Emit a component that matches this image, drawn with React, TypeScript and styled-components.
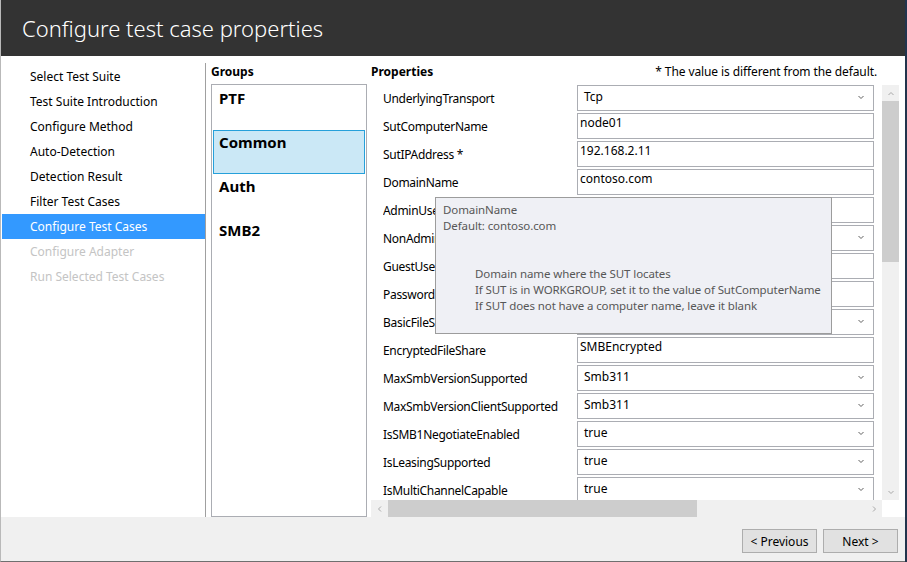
import React, { FC } from "react";
import styled, { createGlobalStyle } from "styled-components";

const GlobalStyle = createGlobalStyle`
  html, body {
    margin: 0;
    padding: 0;
    background: #22344d;
  }
  body {
    font-family: "Noto Sans", "Segoe UI", sans-serif;
    font-size: 12px;
    color: #000;
  }
  * {
    box-sizing: border-box;
  }
`;

const Window = styled.div`
  position: relative;
  width: 905px;
  height: 562px;
  display: flex;
  flex-direction: column;
  background: #fff;
  border-left: 1px solid #b9b9b9;
  border-bottom: 1px solid #6f6f6f;
`;

const Header = styled.header`
  height: 56px;
  flex: none;
  display: flex;
  align-items: center;
  padding: 0 0 1px 21px;
  background: #333333;
  color: #fff;
  font-size: 22px;
  font-weight: 300;
`;

const Main = styled.div`
  flex: 1;
  display: flex;
  min-height: 0;
`;

const Nav = styled.ul`
  list-style: none;
  width: 205px;
  margin: 7px 0 0;
  padding: 1px 0 0 1px;
  border-right: 1px solid #a0a0a0;
`;

const NavItem = styled.li<{ $state?: "active" | "disabled" }>`
  height: 25px;
  line-height: 25px;
  padding-left: 28px;
  color: ${(p) =>
    p.$state === "active" ? "#fff" : p.$state === "disabled" ? "#c4c4c4" : "#000"};
  background: ${(p) => (p.$state === "active" ? "#3399ff" : "transparent")};
`;

const GroupsColumn = styled.section`
  width: 161px;
  display: flex;
  flex-direction: column;
  gap: 4px;
  padding: 8px 0 0 5px;
`;

const SectionTitle = styled.div`
  height: 16px;
  line-height: 16px;
  font-weight: 700;
`;

const GroupList = styled.div`
  flex: 1;
  border: 1px solid #abadb3;
  padding: 1px;
`;

const GroupItem = styled.div<{ $selected?: boolean }>`
  height: 44px;
  padding: 1px 5px;
  line-height: 20px;
  font-size: 15px;
  font-weight: 700;
  border: 1px solid ${(p) => (p.$selected ? "#26a0da" : "transparent")};
  background: ${(p) => (p.$selected ? "#cbe8f6" : "transparent")};
`;

const PropsColumn = styled.section`
  flex: 1;
  display: flex;
  flex-direction: column;
  gap: 5px;
  margin: 0 6px 0 4px;
  padding-top: 8px;
`;

const PropsHead = styled.div`
  display: flex;
  justify-content: space-between;
  padding-right: 22px;
`;

const Note = styled.span`
  line-height: 16px;
  letter-spacing: -0.1px;
`;

const ScrollArea = styled.div`
  flex: 1;
  display: grid;
  grid-template-columns: 1fr 17px;
  grid-template-rows: 1fr 17px;
  min-height: 0;
`;

const Viewport = styled.div`
  overflow: hidden;
  padding-left: 12px;
`;

const Row = styled.div`
  display: flex;
  height: 28px;
`;

const Label = styled.div`
  width: 194px;
  flex: none;
  padding-top: 6px;
  line-height: 16px;
  letter-spacing: -0.3px;
  white-space: nowrap;
  overflow: hidden;
`;

const Field = styled.div<{ $combo?: boolean }>`
  width: 297px;
  height: 26px;
  flex: none;
  display: flex;
  align-items: ${(p) => (p.$combo ? "center" : "flex-start")};
  justify-content: space-between;
  padding: ${(p) => (p.$combo ? "0 8px 2px 6px" : "1px 3px 0 2px")};
  line-height: 16px;
  border: 1px solid #abadb3;
  background: #fff;
`;

const VBar = styled.div`
  display: flex;
  flex-direction: column;
  background: #f0f0f0;
`;

const HBar = styled.div`
  display: flex;
  background: #f0f0f0;
`;

const ArrowBtn = styled.div`
  width: 17px;
  height: 17px;
  flex: none;
  display: flex;
  align-items: center;
  justify-content: center;
`;

const Thumb = styled.div<{ $offset: number; $size: number; $dir: "v" | "h" }>`
  background: #cdcdcd;
  flex: none;
  ${(p) =>
    p.$dir === "v"
      ? `width: 17px; height: ${p.$size}px; margin-top: ${p.$offset}px;`
      : `height: 17px; width: ${p.$size}px; margin-left: ${p.$offset}px;`}
`;

const Spacer = styled.div`
  flex: 1;
`;

const Corner = styled.div`
  background: #fff;
`;

const Footer = styled.footer`
  height: 44px;
  flex: none;
  display: flex;
  justify-content: flex-end;
  align-items: flex-start;
  gap: 6px;
  padding: 12px 7px 0 0;
  background: #f0f0f0;
`;

const Button = styled.button`
  width: 75px;
  height: 24px;
  padding: 0;
  font-family: inherit;
  font-size: 12px;
  color: #000;
  background: #e1e1e1;
  border: 1px solid #adadad;
`;

const Tooltip = styled.div`
  position: absolute;
  left: 434px;
  top: 197px;
  width: 397px;
  height: 137px;
  padding: 4px 7px;
  font-size: 11.5px;
  line-height: 16px;
  letter-spacing: -0.1px;
  white-space: nowrap;
  color: #575757;
  background: #eff0f5;
  border: 1px solid #9c9c9c;
`;

const TipBody = styled.div`
  margin-top: 32px;
  padding-left: 32px;
`;

const Chevron: FC<{ dir: "down" | "up" | "left" | "right"; color?: string }> = ({
  dir,
  color = "#606060",
}) => {
  const rot = { down: 0, up: 180, left: 90, right: -90 }[dir];
  return (
    <svg width="8" height="8" viewBox="0 0 8 8" style={{ transform: `rotate(${rot}deg)` }}>
      <path d="M1.5 3 L4 5.5 L6.5 3" fill="none" stroke={color} strokeWidth="1" />
    </svg>
  );
};

type Prop = { name: string; value?: string; combo?: boolean };

const properties: Prop[] = [
  { name: "UnderlyingTransport", value: "Tcp", combo: true },
  { name: "SutComputerName", value: "node01" },
  { name: "SutIPAddress *", value: "192.168.2.11" },
  { name: "DomainName", value: "contoso.com" },
  { name: "AdminUserName", value: "administrator" },
  { name: "NonAdminUserName", value: "nonadmin", combo: true },
  { name: "GuestUserName", value: "Guest" },
  { name: "PasswordForAllUsers", value: "Password01!" },
  { name: "BasicFileShare", value: "SMBBasic", combo: true },
  { name: "EncryptedFileShare", value: "SMBEncrypted" },
  { name: "MaxSmbVersionSupported", value: "Smb311", combo: true },
  { name: "MaxSmbVersionClientSupported", value: "Smb311", combo: true },
  { name: "IsSMB1NegotiateEnabled", value: "true", combo: true },
  { name: "IsLeasingSupported", value: "true", combo: true },
  { name: "IsMultiChannelCapable", value: "true", combo: true },
  { name: "IsEncryptionSupported", value: "true", combo: true },
];

const steps: { label: string; state?: "active" | "disabled" }[] = [
  { label: "Select Test Suite" },
  { label: "Test Suite Introduction" },
  { label: "Configure Method" },
  { label: "Auto-Detection" },
  { label: "Detection Result" },
  { label: "Filter Test Cases" },
  { label: "Configure Test Cases", state: "active" },
  { label: "Configure Adapter", state: "disabled" },
  { label: "Run Selected Test Cases", state: "disabled" },
];

const groups = ["PTF", "Common", "Auth", "SMB2"];

export default function App() {
  return (
    <>
      <GlobalStyle />
      <Window>
        <Header>Configure test case properties</Header>
        <Main>
          <Nav>
            {steps.map((s) => (
              <NavItem key={s.label} $state={s.state}>
                {s.label}
              </NavItem>
            ))}
          </Nav>
          <GroupsColumn>
            <SectionTitle>Groups</SectionTitle>
            <GroupList>
              {groups.map((g) => (
                <GroupItem key={g} $selected={g === "Common"}>
                  {g}
                </GroupItem>
              ))}
            </GroupList>
          </GroupsColumn>
          <PropsColumn>
            <PropsHead>
              <SectionTitle>Properties</SectionTitle>
              <Note>* The value is different from the default.</Note>
            </PropsHead>
            <ScrollArea>
              <Viewport>
                {properties.map((p) => (
                  <Row key={p.name}>
                    <Label>{p.name}</Label>
                    <Field $combo={p.combo}>
                      <span>{p.value}</span>
                      {p.combo && <Chevron dir="down" />}
                    </Field>
                  </Row>
                ))}
              </Viewport>
              <VBar>
                <ArrowBtn>
                  <Chevron dir="up" color="#a8a8a8" />
                </ArrowBtn>
                <Thumb $dir="v" $offset={-1} $size={161} />
                <Spacer />
                <ArrowBtn>
                  <Chevron dir="down" color="#a8a8a8" />
                </ArrowBtn>
              </VBar>
              <HBar>
                <ArrowBtn>
                  <Chevron dir="left" color="#a8a8a8" />
                </ArrowBtn>
                <Thumb $dir="h" $offset={0} $size={309} />
                <Spacer />
                <ArrowBtn>
                  <Chevron dir="right" color="#a8a8a8" />
                </ArrowBtn>
              </HBar>
              <Corner />
            </ScrollArea>
          </PropsColumn>
        </Main>
        <Footer>
          <Button>&lt; Previous</Button>
          <Button>Next &gt;</Button>
        </Footer>
        <Tooltip>
          <div>DomainName</div>
          <div>Default: contoso.com</div>
          <TipBody>
            <div>Domain name where the SUT locates</div>
            <div>If SUT is in WORKGROUP, set it to the value of SutComputerName</div>
            <div>If SUT does not have a computer name, leave it blank</div>
          </TipBody>
        </Tooltip>
      </Window>
    </>
  );
}
